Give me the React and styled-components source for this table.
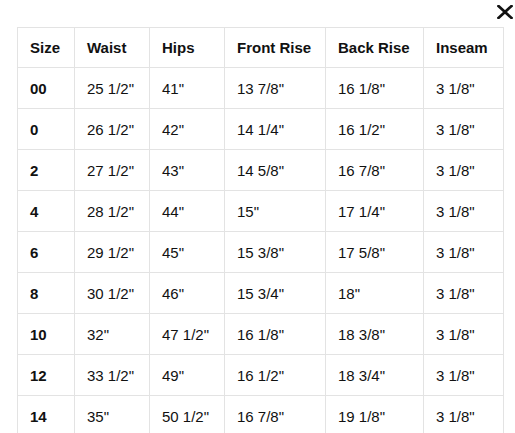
import React from "react";
import styled, { createGlobalStyle } from "styled-components";

const GlobalStyle = createGlobalStyle`
  html, body {
    margin: 0;
    padding: 0;
    background: #fff;
  }
  body {
    font-family: "Liberation Sans", Arial, sans-serif;
    color: #111;
  }
`;

const Modal = styled.div`
  width: 515px;
  height: 433px;
  overflow: hidden;
  padding: 0 2px 0 17px;
  box-sizing: border-box;
`;

const TopBar = styled.div`
  height: 27px;
  display: flex;
  justify-content: flex-end;
  align-items: flex-start;
`;

const CloseButton = styled.button`
  appearance: none;
  border: none;
  background: none;
  padding: 0;
  margin-top: 4px;
  width: 16px;
  height: 16px;
  cursor: pointer;
  display: flex;
  align-items: center;
  justify-content: center;
  color: #111;
`;

const SizeTable = styled.table`
  border-collapse: collapse;
  table-layout: fixed;
  width: 486px;
  font-size: 15px;
`;

const HeadCell = styled.th`
  box-sizing: border-box;
  border: 1px solid #e3e3e3;
  height: 40px;
  padding: 0 0 0 12px;
  text-align: left;
  font-weight: bold;
  white-space: nowrap;
  width: ${(p) => p.$w}px;
`;

const Cell = styled.td`
  border: 1px solid #e3e3e3;
  height: 40px;
  padding: 0 0 0 12px;
  text-align: left;
  white-space: nowrap;
  font-weight: ${(p) => (p.$bold ? "bold" : "normal")};
`;

const columns = [
  { title: "Size", width: 57 },
  { title: "Waist", width: 75 },
  { title: "Hips", width: 75 },
  { title: "Front Rise", width: 101 },
  { title: "Back Rise", width: 98 },
  { title: "Inseam", width: 80 },
];

const rows = [
  ["00", '25 1/2"', '41"', '13 7/8"', '16 1/8"', '3 1/8"'],
  ["0", '26 1/2"', '42"', '14 1/4"', '16 1/2"', '3 1/8"'],
  ["2", '27 1/2"', '43"', '14 5/8"', '16 7/8"', '3 1/8"'],
  ["4", '28 1/2"', '44"', '15"', '17 1/4"', '3 1/8"'],
  ["6", '29 1/2"', '45"', '15 3/8"', '17 5/8"', '3 1/8"'],
  ["8", '30 1/2"', '46"', '15 3/4"', '18"', '3 1/8"'],
  ["10", '32"', '47 1/2"', '16 1/8"', '18 3/8"', '3 1/8"'],
  ["12", '33 1/2"', '49"', '16 1/2"', '18 3/4"', '3 1/8"'],
  ["14", '35"', '50 1/2"', '16 7/8"', '19 1/8"', '3 1/8"'],
];

export default function App() {
  return (
    <>
      <GlobalStyle />
      <Modal>
        <TopBar>
          <CloseButton aria-label="Close">
            <svg width="16" height="14" viewBox="0 0 16 14">
              <path
                d="M1.5 1 L14.5 13 M14.5 1 L1.5 13"
                stroke="currentColor"
                strokeWidth="2.6"
                strokeLinecap="square"
                fill="none"
              />
            </svg>
          </CloseButton>
        </TopBar>
        <SizeTable>
          <thead>
            <tr>
              {columns.map((col) => (
                <HeadCell key={col.title} $w={col.width}>
                  {col.title}
                </HeadCell>
              ))}
            </tr>
          </thead>
          <tbody>
            {rows.map((row) => (
              <tr key={row[0]}>
                {row.map((value, index) => (
                  <Cell key={index} $bold={index === 0}>
                    {value}
                  </Cell>
                ))}
              </tr>
            ))}
          </tbody>
        </SizeTable>
      </Modal>
    </>
  );
}
